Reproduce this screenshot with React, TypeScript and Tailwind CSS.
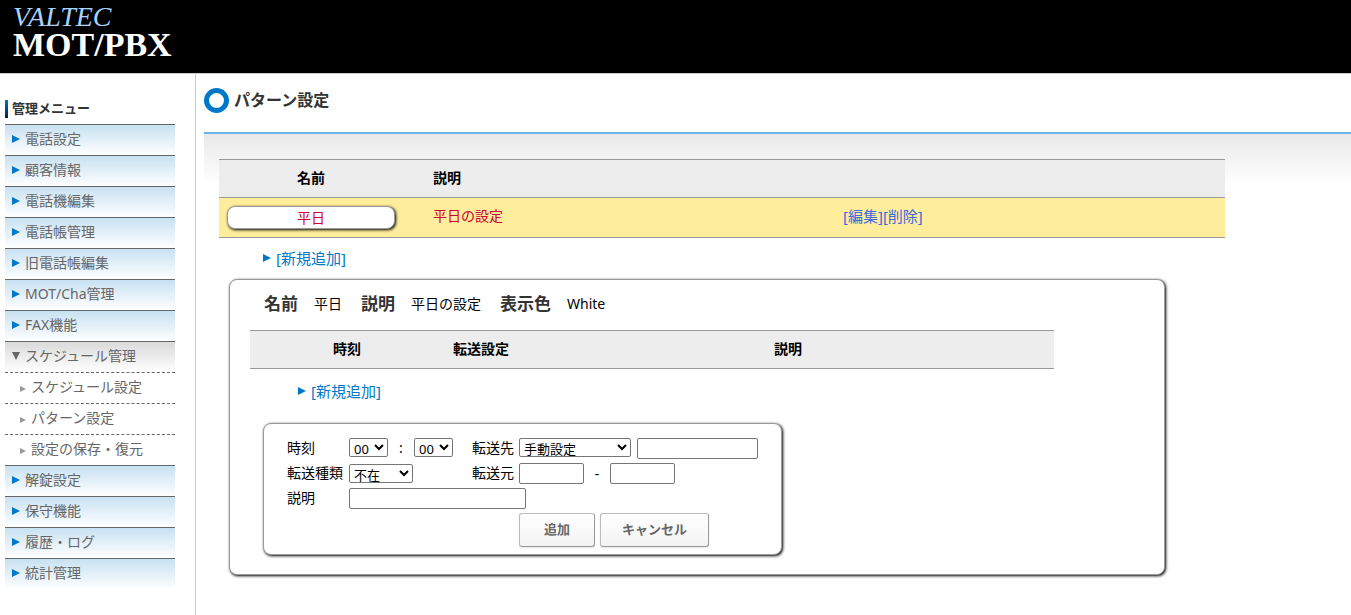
import React, { useState } from "react";
import clsx from "clsx";

interface MenuItem {
  label: string;
  children?: string[];
}

const menuItems: MenuItem[] = [
  { label: "電話設定" },
  { label: "顧客情報" },
  { label: "電話機編集" },
  { label: "電話帳管理" },
  { label: "旧電話帳編集" },
  { label: "MOT/Cha管理" },
  { label: "FAX機能" },
  { label: "スケジュール管理", children: ["スケジュール設定", "パターン設定", "設定の保存・復元"] },
  { label: "解錠設定" },
  { label: "保守機能" },
  { label: "履歴・ログ" },
  { label: "統計管理" },
];

const panelClass = "rounded-lg border border-[#999] bg-white shadow-[1px_1px_3px_#000]";
const fieldClass = "h-[21px] rounded-[2px] border border-[#767676] bg-white px-1 text-[13px]";
const selectClass = "h-[19px] rounded-[2px] border border-[#767676] bg-white text-[13px] leading-4";
const labelClass = "pb-0.5 leading-[19px]";
const buttonClass =
  "h-[34px] rounded-[3px] border border-[#bbb] border-r-[#999] border-b-[#999] bg-linear-to-b from-white to-[#f3f3f3] pb-0.5 text-[13px] font-bold text-[#666] shadow-[0_1px_2px_#e5e5e5] cursor-pointer";
const headCellClass = "h-[39px] border-y border-[#999] bg-[#ededed] px-0 pt-0 pb-0.5 font-bold";
const bodyCellClass = "h-10 border-b border-[#999] pt-0 pb-1";

const RightArrow: React.FC<{ className: string }> = ({ className }) => (
  <svg viewBox="0 0 8 8" className={clsx("shrink-0 fill-current", className)} aria-hidden="true">
    <path d="M0 0L8 4L0 8Z" />
  </svg>
);

const AddLink: React.FC = () => (
  <a href="#" className="flex items-center gap-[5px] pb-0.5 text-[15px] text-[#0078c8]">
    <RightArrow className="size-2" />
    [新規追加]
  </a>
);

const Sidebar: React.FC = () => (
  <aside className="w-[196px] shrink-0 border-r border-[#ccc] pt-[26px] pl-[5px]">
    <h2 className="flex h-[18px] items-center border-l-3 border-[#00508c] pb-0.5 pl-1 text-[13px] font-bold text-[#333] [border-image:linear-gradient(#0078c8,#002040)_1]">
      管理メニュー
    </h2>
    <nav className="mt-1.5 w-[170px] text-[#666]">
      <ul>
        {menuItems.map((item) => (
          <li key={item.label}>
            <a
              href="#"
              className={clsx(
                "flex h-[31px] items-center gap-[5px] border-t border-[#666] bg-linear-to-b to-white pb-0.5 pl-[7px]",
                item.children ? "from-[#dadada]" : "from-[#c8e1f2]"
              )}
            >
              {item.children ? (
                <svg viewBox="0 0 8 8" className="size-2 shrink-0 fill-current" aria-hidden="true">
                  <path d="M0 0H8L4 8Z" />
                </svg>
              ) : (
                <RightArrow className="size-2 text-[#0078c8]" />
              )}
              {item.label}
            </a>
            {item.children && (
              <ul>
                {item.children.map((child) => (
                  <li key={child}>
                    <a
                      href="#"
                      className="flex h-[31px] items-center gap-[5px] border-t border-dashed border-[#666] pb-0.5 pl-[15px]"
                    >
                      <RightArrow className="mt-1 size-1.5 text-[#999]" />
                      {child}
                    </a>
                  </li>
                ))}
              </ul>
            )}
          </li>
        ))}
      </ul>
    </nav>
  </aside>
);

const PatternTable: React.FC = () => (
  <table className="w-full max-w-[1006px] table-fixed border-separate border-spacing-0">
    <colgroup>
      <col className="w-[184px]" />
      <col className="w-[410px]" />
      <col />
    </colgroup>
    <thead>
      <tr>
        <th className={headCellClass}>名前</th>
        <th className={clsx(headCellClass, "pl-[30px] text-left")}>説明</th>
        <td className={headCellClass} />
      </tr>
    </thead>
    <tbody>
      <tr className="bg-[#feed9b] text-[#cc0033]">
        <td className="h-10 border-b border-[#999] px-2 py-0">
          <button type="button" className={clsx(panelClass, "block h-[23px] w-full cursor-pointer")}>
            平日
          </button>
        </td>
        <td className={clsx(bodyCellClass, "pl-[30px]")}>平日の設定</td>
        <td className={clsx(bodyCellClass, "pl-[30px] text-[15px] text-[#4169e1]")}>
          <a href="#">[編集]</a>
          <a href="#">[削除]</a>
        </td>
      </tr>
    </tbody>
  </table>
);

const TransferForm: React.FC = () => {
  const [hour, setHour] = useState("00");
  const [minute, setMinute] = useState("00");

  return (
    <form
      className={clsx(
        panelClass,
        "ml-[13px] grid max-w-[519px] grid-cols-[62px_123px_47px_1fr] items-center gap-y-1 pt-[14px] pr-4 pb-[7px] pl-[23px]"
      )}
      onSubmit={(e) => e.preventDefault()}
    >
      <label htmlFor="hour" className={labelClass}>
        時刻
      </label>
      <div className="flex h-[21px] items-start">
        <select id="hour" value={hour} onChange={(e) => setHour(e.target.value)} className={clsx(selectClass, "w-[39px]")}>
          <option>00</option>
          <option>12</option>
        </select>
        <span className="w-[26px] text-center leading-[19px]">:</span>
        <select
          aria-label="分"
          value={minute}
          onChange={(e) => setMinute(e.target.value)}
          className={clsx(selectClass, "w-[39px]")}
        >
          <option>00</option>
          <option>30</option>
        </select>
      </div>
      <label htmlFor="target" className={labelClass}>
        転送先
      </label>
      <div className="flex h-[21px] items-start gap-1.5">
        <select id="target" className={clsx(selectClass, "w-[112px]")}>
          <option>手動設定</option>
        </select>
        <input type="text" aria-label="転送先番号" className={clsx(fieldClass, "w-[121px]")} />
      </div>

      <label htmlFor="kind" className={labelClass}>
        転送種類
      </label>
      <div className="flex h-[21px] items-center">
        <select id="kind" className={clsx(selectClass, "w-16")}>
          <option>不在</option>
        </select>
      </div>
      <label htmlFor="source" className={labelClass}>
        転送元
      </label>
      <div className="flex h-[21px] items-center">
        <input id="source" type="text" className={clsx(fieldClass, "w-[65px]")} />
        <span className="w-[26px] text-center">-</span>
        <input type="text" aria-label="転送元 終了" className={clsx(fieldClass, "w-[65px]")} />
      </div>

      <label htmlFor="note" className={labelClass}>
        説明
      </label>
      <input id="note" type="text" className={clsx(fieldClass, "col-span-3 w-[177px]")} />

      <div className="col-start-4 flex gap-[5px]">
        <button type="submit" className={clsx(buttonClass, "w-[76px]")}>
          追加
        </button>
        <button type="button" className={clsx(buttonClass, "w-[109px]")}>
          キャンセル
        </button>
      </div>
    </form>
  );
};

const details = [
  { term: "名前", value: "平日" },
  { term: "説明", value: "平日の設定" },
  { term: "表示色", value: "White" },
];

const PatternDetail: React.FC = () => (
  <section className={clsx(panelClass, "ml-2.5 max-w-[936px] px-5 pb-[19px]")}>
    <dl className="flex h-[50px] items-center gap-[19px] pb-0.5 pl-[14px]">
      {details.map((d) => (
        <div key={d.term} className="flex items-center gap-4">
          <dt className="text-[17px] font-bold text-[#333]">{d.term}</dt>
          <dd>{d.value}</dd>
        </div>
      ))}
    </dl>
    <table className="w-full max-w-[804px] table-fixed border-separate border-spacing-0">
      <colgroup>
        <col className="w-[194px]" />
        <col className="w-[321px]" />
        <col />
      </colgroup>
      <thead>
        <tr>
          <th className={headCellClass}>時刻</th>
          <th className={clsx(headCellClass, "pl-[9px] text-left")}>転送設定</th>
          <th className={clsx(headCellClass, "pl-[9px] text-left")}>説明</th>
        </tr>
      </thead>
    </table>
    <div className="mb-2 flex h-[46px] items-center pl-12">
      <AddLink />
    </div>
    <TransferForm />
  </section>
);

export default function App() {
  return (
    <div className="flex min-h-screen flex-col bg-white font-['Noto_Sans','Noto_Sans_CJK_JP',sans-serif] text-[14px] leading-5 text-black">
      <header className="h-[74px] border-b border-[#ccc] bg-black pt-1 pl-[13px] font-['Liberation_Serif',serif]">
        <div className="text-[28px] leading-[26px] text-[#a9d2ff] italic">VALTEC</div>
        <div className="text-[34px] leading-[30px] font-bold text-white">MOT/PBX</div>
      </header>

      <div className="flex grow">
        <Sidebar />
        <main className="min-w-0 grow pl-2">
          <div className="flex items-center gap-[5px] border-b-2 border-[#6cb5e8] pt-[14px] pb-[19px]">
            <span className="size-[25px] rounded-full border-[5px] border-[#0078c8]" />
            <h1 className="pb-0.5 text-[16px] font-bold text-[#333]">パターン設定</h1>
          </div>
          <div className="bg-linear-to-b from-[#e9e9e9] to-white bg-[length:100%_50px] bg-no-repeat pt-[25px] pr-4 pb-8 pl-[15px]">
            <PatternTable />
            <div className="flex h-[41px] items-center pl-11">
              <AddLink />
            </div>
            <PatternDetail />
          </div>
        </main>
      </div>
    </div>
  );
}
